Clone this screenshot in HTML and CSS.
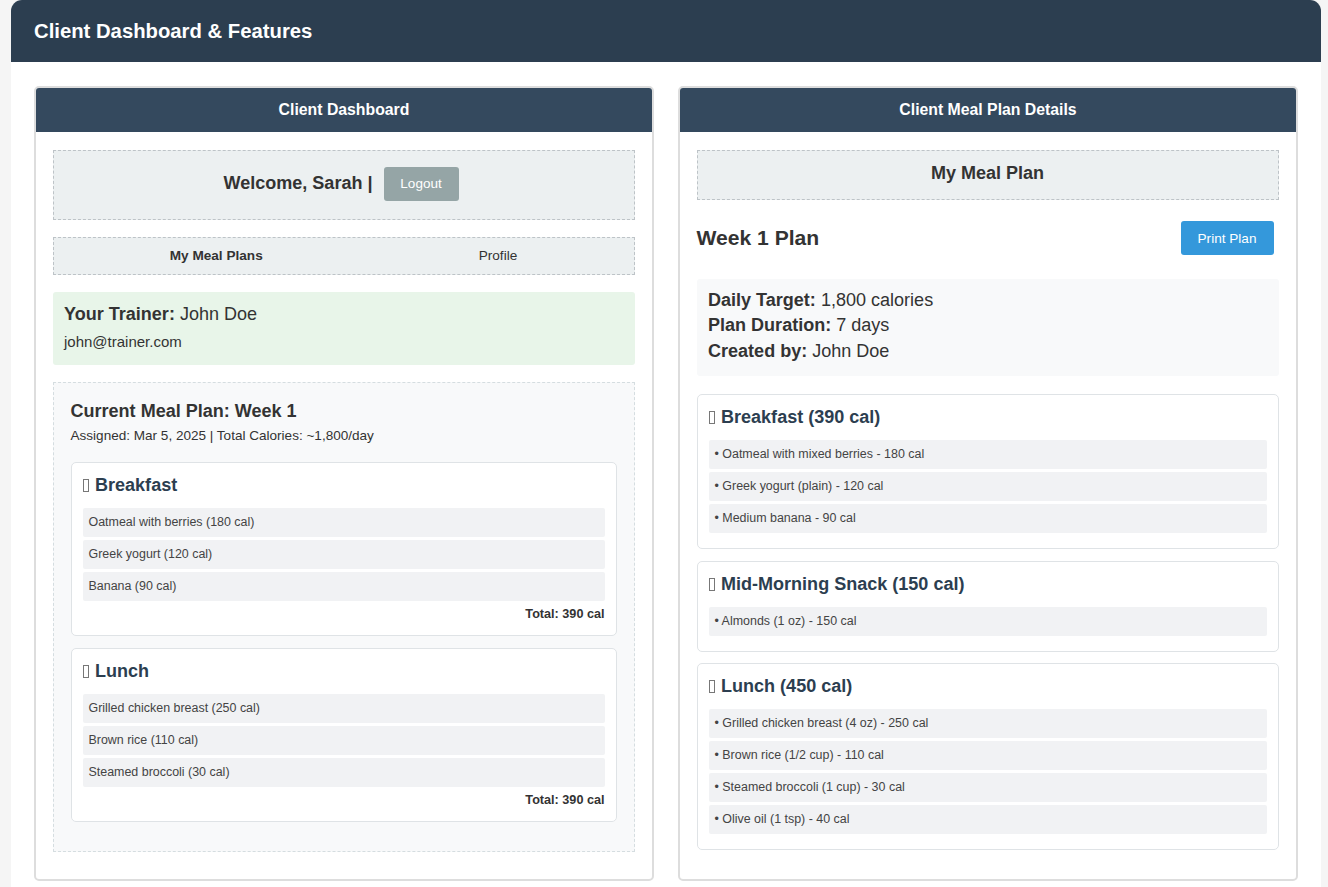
FILE: index.html
```html
<!DOCTYPE html>
<html lang="en">
<head>
  <meta charset="UTF-8">
  <meta name="viewport" content="width=device-width, initial-scale=1.0">
  <title>Client Dashboard &amp; Features</title>
  <link rel="stylesheet" href="styles.css">
</head>
<body>
  <div class="container">
    <header class="page-header">
      <h1>Client Dashboard &amp; Features</h1>
    </header>

    <main class="columns">
      <section class="panel">
        <h2 class="panel-title">Client Dashboard</h2>
        <div class="panel-body">
          <div class="welcome">
            <span>Welcome, Sarah |</span>
            <button class="logout">Logout</button>
          </div>

          <nav class="tabs">
            <a class="tab active">My Meal Plans</a>
            <a class="tab">Profile</a>
          </nav>

          <div class="trainer">
            <p class="trainer-name"><strong>Your Trainer:</strong> John Doe</p>
            <p class="trainer-mail">john@trainer.com</p>
          </div>

          <div class="current-plan">
            <h3>Current Meal Plan: Week 1</h3>
            <p class="assigned">Assigned: Mar 5, 2025 | Total Calories: ~1,800/day</p>

            <div class="meal">
              <h4 class="meal-name"><span class="tofu"></span>Breakfast</h4>
              <div class="food">Oatmeal with berries (180 cal)</div>
              <div class="food">Greek yogurt (120 cal)</div>
              <div class="food">Banana (90 cal)</div>
              <div class="meal-total">Total: 390 cal</div>
            </div>

            <div class="meal">
              <h4 class="meal-name"><span class="tofu"></span>Lunch</h4>
              <div class="food">Grilled chicken breast (250 cal)</div>
              <div class="food">Brown rice (110 cal)</div>
              <div class="food">Steamed broccoli (30 cal)</div>
              <div class="meal-total">Total: 390 cal</div>
            </div>
          </div>
        </div>
      </section>

      <section class="panel">
        <h2 class="panel-title">Client Meal Plan Details</h2>
        <div class="panel-body">
          <div class="plan-banner">My Meal Plan</div>

          <div class="plan-head">
            <h3>Week 1 Plan</h3>
            <button class="print">Print Plan</button>
          </div>

          <div class="plan-info">
            <div><strong>Daily Target:</strong> 1,800 calories</div>
            <div><strong>Plan Duration:</strong> 7 days</div>
            <div><strong>Created by:</strong> John Doe</div>
          </div>

          <div class="meal detail">
            <h4 class="meal-name"><span class="tofu"></span>Breakfast (390 cal)</h4>
            <div class="food">• Oatmeal with mixed berries - 180 cal</div>
            <div class="food">• Greek yogurt (plain) - 120 cal</div>
            <div class="food">• Medium banana - 90 cal</div>
          </div>

          <div class="meal detail">
            <h4 class="meal-name"><span class="tofu"></span>Mid-Morning Snack (150 cal)</h4>
            <div class="food">• Almonds (1 oz) - 150 cal</div>
          </div>

          <div class="meal detail">
            <h4 class="meal-name"><span class="tofu"></span>Lunch (450 cal)</h4>
            <div class="food">• Grilled chicken breast (4 oz) - 250 cal</div>
            <div class="food">• Brown rice (1/2 cup) - 110 cal</div>
            <div class="food">• Steamed broccoli (1 cup) - 30 cal</div>
            <div class="food">• Olive oil (1 tsp) - 40 cal</div>
          </div>
        </div>
      </section>
    </main>
  </div>
</body>
</html>
```

FILE: styles.css
```css
* {
  box-sizing: border-box;
}
body {
  margin: 0;
  background-color: #f5f5f5;
  color: #333;
  font-family: "Liberation Sans", Arial, sans-serif;
}
h1,
h2,
h3,
h4,
p {
  margin: 0;
}
.container {
  margin: 0 7px 0 11px;
  background-color: white;
  border-radius: 11px 11px 0 0;
  min-height: 887px;
}
.page-header {
  height: 62px;
  padding-left: 23px;
  display: flex;
  align-items: center;
  background-color: #2c3e50;
  border-radius: 11px 11px 0 0;
  color: white;
}
.page-header h1 {
  font-size: 20.3px;
}
.columns {
  display: grid;
  grid-template-columns: 620px 620px;
  gap: 24px;
  padding: 24px 24px 7px 23px;
}
.panel {
  border: 2px solid #ddd;
  border-radius: 5px;
  height: 795px;
  overflow: hidden;
}
.panel-title {
  height: 44px;
  line-height: 44px;
  text-align: center;
  background-color: #34495e;
  color: white;
  font-size: 15.8px;
}
.panel-body {
  padding: 17.5px 17.5px 18px 16.5px;
}
.welcome {
  height: 70px;
  margin-bottom: 17px;
  padding-bottom: 2px;
  display: flex;
  justify-content: center;
  align-items: center;
  gap: 11px;
  background-color: #ecf0f1;
  border: 1px dashed #bdc3c7;
  font-size: 18.05px;
  font-weight: bold;
}
.logout {
  width: 75px;
  height: 34px;
  margin-right: 5px;
  background-color: #95a5a6;
  color: white;
  border: none;
  border-radius: 3px;
  font-family: inherit;
  font-size: 13.5px;
}
.tabs {
  height: 38px;
  margin-bottom: 17px;
  padding-bottom: 1px;
  display: flex;
  justify-content: center;
  align-items: center;
  gap: 216px;
  background-color: #ecf0f1;
  border: 1px dashed #bdc3c7;
  font-size: 13.6px;
}
.tab.active {
  font-weight: bold;
}
.trainer {
  height: 73px;
  margin-bottom: 17px;
  padding: 11px 11.5px;
  background-color: #e8f5e9;
  border-radius: 3px;
}
.trainer-name {
  font-size: 18.05px;
  line-height: 22px;
  margin-bottom: 8px;
}
.trainer-mail {
  font-size: 15px;
  line-height: 17px;
}
.current-plan {
  height: 470px;
  padding: 17px;
  background-color: #f8f9fa;
  border: 1px dashed #d5dde0;
}
.current-plan h3 {
  font-size: 18.05px;
  line-height: 22px;
  margin-bottom: 5px;
}
.assigned {
  font-size: 13.55px;
  line-height: 17px;
  margin-bottom: 18px;
}
.meal {
  height: 174px;
  margin-bottom: 12px;
  padding: 11px;
  background-color: white;
  border: 1.5px solid #dfe3e6;
  border-radius: 5px;
}
.meal-name {
  font-size: 18.05px;
  line-height: 22px;
  margin-bottom: 12px;
  color: #2c3e50;
}
.tofu {
  display: inline-block;
  width: 6px;
  height: 13px;
  margin: 0 6px 0 0.5px;
  border: 1px solid #777;
  vertical-align: -1px;
}
.food {
  height: 29px;
  line-height: 28px;
  margin-bottom: 3px;
  padding-left: 6px;
  background-color: #f1f2f4;
  border-radius: 2px;
  font-size: 12.45px;
  color: #444;
}
.meal-total {
  margin-top: 1px;
  text-align: right;
  font-size: 12.65px;
  font-weight: bold;
  line-height: 20px;
}
.plan-banner {
  height: 50px;
  line-height: 44px;
  text-align: center;
  background-color: #ecf0f1;
  border: 1px dashed #bdc3c7;
  font-size: 18.05px;
  font-weight: bold;
}
.plan-head {
  height: 79.5px;
  padding-right: 5px;
  display: flex;
  justify-content: space-between;
  align-items: center;
}
.plan-head h3 {
  margin-bottom: 3px;
  font-size: 21.1px;
}
.print {
  width: 93px;
  height: 34px;
  margin-bottom: 2px;
  background-color: #3498db;
  color: white;
  border: none;
  border-radius: 3px;
  font-family: inherit;
  font-size: 13.6px;
}
.plan-info {
  height: 97px;
  margin-bottom: 18px;
  padding: 9px 11.5px;
  background-color: #f8f9fa;
  border-radius: 3px;
  font-size: 18.05px;
  line-height: 25.4px;
}
.detail {
  height: auto;
  padding-bottom: 15px;
  margin-bottom: 11.6px;
}
.detail .food:last-child {
  margin-bottom: 0;
}
```
